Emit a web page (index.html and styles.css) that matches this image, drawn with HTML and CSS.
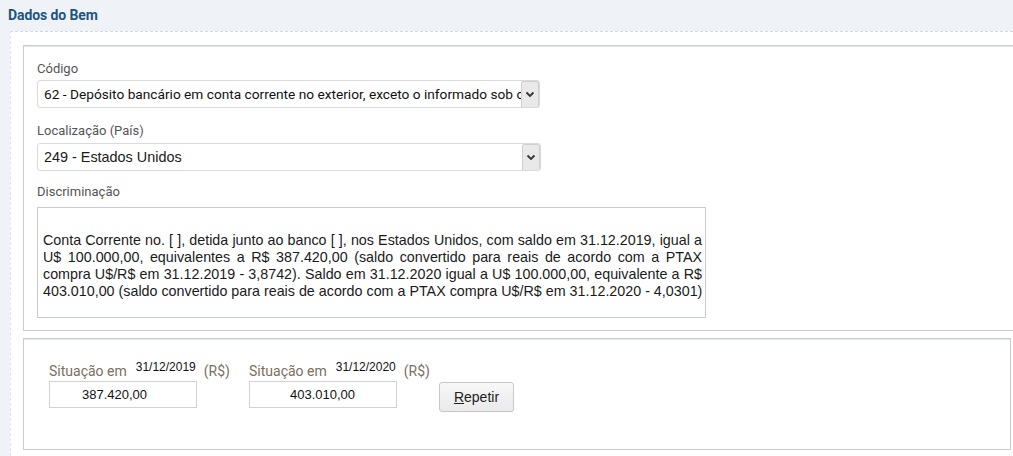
FILE: index.html
```html
<!DOCTYPE html>
<html lang="pt-BR">
<head>
<meta charset="utf-8">
<title>Dados do Bem</title>
<link rel="stylesheet" href="styles.css">
</head>
<body>
<h1 class="title">Dados do Bem</h1>
<div class="panel">
  <div class="box box-main">
    <div class="label lbl-codigo">Código</div>
    <div class="select sel-codigo">
      <span class="sel-text">62 - Depósito bancário em conta corrente no exterior, exceto o informado sob o código 61</span>
      <span class="arrow"><svg width="10" height="7" viewBox="0 0 10 7"><path d="M1.5 1.5 L5 5 L8.5 1.5" fill="none" stroke="#333" stroke-width="1.8"/></svg></span>
    </div>
    <div class="label lbl-local">Localização (País)</div>
    <div class="select sel-local">
      <span class="sel-text">249 - Estados Unidos</span>
      <span class="arrow"><svg width="10" height="7" viewBox="0 0 10 7"><path d="M1.5 1.5 L5 5 L8.5 1.5" fill="none" stroke="#333" stroke-width="1.8"/></svg></span>
    </div>
    <div class="label lbl-disc">Discriminação</div>
    <div class="textarea">
      <span class="tline">Conta Corrente no. [ ], detida junto ao banco [ ], nos Estados Unidos, com saldo em 31.12.2019, igual a</span>
      <span class="tline">U$ 100.000,00, equivalentes a R$ 387.420,00 (saldo convertido para reais de acordo com a PTAX</span>
      <span class="tline">compra U$/R$ em 31.12.2019 - 3,8742). Saldo em 31.12.2020 igual a U$ 100.000,00, equivalente a R$</span>
      <span class="tline last">403.010,00 (saldo convertido para reais de acordo com a PTAX compra U$/R$ em 31.12.2020 - 4,0301)</span>
    </div>
  </div>
  <div class="box box-values">
    <div class="field">
      <div class="field-label"><span class="sit">Situação em</span><span class="date">31/12/2019</span><span class="cur">(R$)</span></div>
      <div class="input in-1">387.420,00</div>
    </div>
    <div class="field">
      <div class="field-label"><span class="sit">Situação em</span><span class="date">31/12/2020</span><span class="cur">(R$)</span></div>
      <div class="input in-2">403.010,00</div>
    </div>
    <button class="btn" type="button"><u>R</u>epetir</button>
  </div>
</div>
</body>
</html>
```

FILE: styles.css
```css
html, body {
  margin: 0;
  padding: 0;
}
body {
  background: #eff3f8;
  width: 1013px;
  height: 456px;
  overflow: hidden;
  font-family: Roboto, "Liberation Sans", Arial, sans-serif;
}
.title {
  margin: 0;
  padding: 7px 0 0 8px;
  height: 24px;
  font-size: 14px;
  line-height: 16px;
  font-weight: bold;
  color: #1d5582;
  letter-spacing: -0.1px;
}
.panel {
  margin-left: 10px;
  width: 1030px;
  background: #fff;
  border-top: 1px dashed #cfd8e2;
  border-left: 1px dashed #dfe5ec;
  padding: 13px 0 6px 12px;
}
.box {
  width: 986px;
  border: 1px solid #c9cdd3;
  box-shadow: inset 0 1px 0 #e6e8eb;
  background: #fff;
}
.box-main {
  padding: 14px 0 12px 13px;
}
.label {
  font-size: 13px;
  line-height: 17px;
  color: #555;
}
.lbl-local { margin-top: 14px; }
.lbl-disc { margin-top: 12px; }
.select {
  display: flex;
  align-items: center;
  height: 26px;
  border: 1px solid #dadada;
  border-radius: 3px;
  background: #fff;
  margin-top: 3px;
  overflow: hidden;
}
.sel-codigo { width: 501px; }
.sel-local { width: 502px; margin-top: 4px; }
.sel-text {
  flex: 1;
  padding-left: 6px;
  font-family: "Liberation Sans", Arial, sans-serif;
  font-size: 14.4px;
  color: #1a1a1a;
  white-space: nowrap;
  overflow: hidden;
}
.sel-codigo .sel-text {
  font-family: Roboto, "Liberation Sans", Arial, sans-serif;
  font-size: 13.7px;
  color: #111;
}
.arrow {
  width: 16px;
  height: 25px;
  display: flex;
  align-items: center;
  justify-content: center;
  background: #e9e9e9;
  border: 1px solid #cfcfcf;
  border-radius: 2px;
}
.textarea {
  width: 659px;
  height: 85px;
  margin-top: 7px;
  border: 1px solid #c6ccd3;
  padding: 24px 3px 0 5px;
  font-family: "Liberation Sans", Arial, sans-serif;
  font-size: 14.3px;
  line-height: 17px;
  color: #1a1a1a;
}
.tline {
  display: block;
  white-space: nowrap;
  text-align: justify;
  text-align-last: justify;
}
.tline.last {
  text-align-last: left;
}
.box-values {
  margin-top: 7px;
  height: 112px;
  display: flex;
  align-items: flex-start;
  padding-left: 25px;
  box-sizing: border-box;
  width: 988px;
  padding-top: 23px;
}
.field {
  display: flex;
  flex-direction: column;
  width: 148px;
  margin-right: 52px;
}
.field + .field {
  margin-right: 42px;
}
.field-label {
  display: flex;
  align-items: flex-start;
  height: 19px;
  white-space: nowrap;
}
.sit {
  font-size: 14px;
  line-height: 17px;
  color: #7d6e5c;
  margin-top: 1px;
}
.date {
  font-family: "Liberation Sans", Arial, sans-serif;
  font-size: 12px;
  line-height: 13px;
  color: #111;
  margin-left: 9px;
  margin-top: -1px;
}
.cur {
  font-size: 14px;
  line-height: 17px;
  color: #7d6e5c;
  margin-left: 8px;
  margin-top: 1px;
}
.input {
  height: 25px;
  border: 1px solid #d2d2d2;
  font-family: "Liberation Sans", Arial, sans-serif;
  font-size: 13px;
  line-height: 25px;
  color: #111;
  box-sizing: content-box;
}
.in-1 { width: 114px; padding-left: 32px; }
.in-2 { width: 106px; padding-left: 40px; }
.btn {
  margin-top: 20px;
  width: 75px;
  height: 30px;
  border: 1px solid #c4c7cc;
  border-radius: 3px;
  background: linear-gradient(#f7f7f7, #eaeaea);
  font-family: "Liberation Sans", Arial, sans-serif;
  font-size: 14px;
  color: #222;
  padding: 0;
}
```
